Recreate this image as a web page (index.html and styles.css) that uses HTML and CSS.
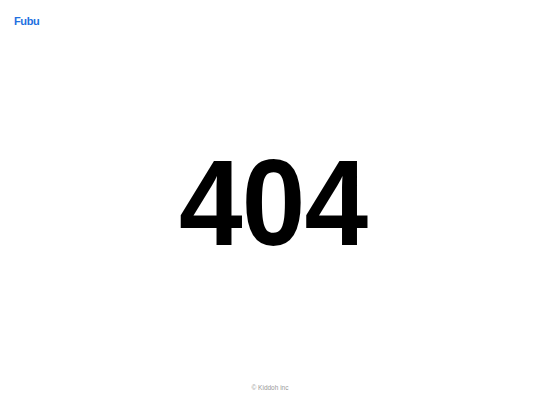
FILE: index.html
```html
<!DOCTYPE html>
<html>
<head>
<meta charset="utf-8">
<link rel="stylesheet" href="styles.css">
</head>
<body>
<div class="page">
  <header class="header"><a class="logo" href="#">Fubu</a></header>
  <main class="main"><h1 class="code">404</h1></main>
  <footer class="footer">© Kiddoh inc</footer>
</div>
</body>
</html>
```
FILE: styles.css
```css
html, body { margin: 0; padding: 0; background: #fff; }
body { font-family: "Liberation Sans", Arial, sans-serif; }
.page { height: 405px; display: flex; flex-direction: column; }
.header { padding: 11px 14px 0; height: 22px; }
.logo { color: #2270e0; font-weight: bold; font-size: 11px; letter-spacing: -0.4px; text-decoration: none; }
.main { flex: 1; display: flex; align-items: center; justify-content: center; padding: 0 0 12px 6px; }
.code { margin: 0; font-size: 123px; font-weight: bold; letter-spacing: -1px; line-height: 1; color: #000; transform: scaleX(0.93); }
.footer { text-align: center; font-size: 6.5px; color: #999; padding-bottom: 14px; }
```
